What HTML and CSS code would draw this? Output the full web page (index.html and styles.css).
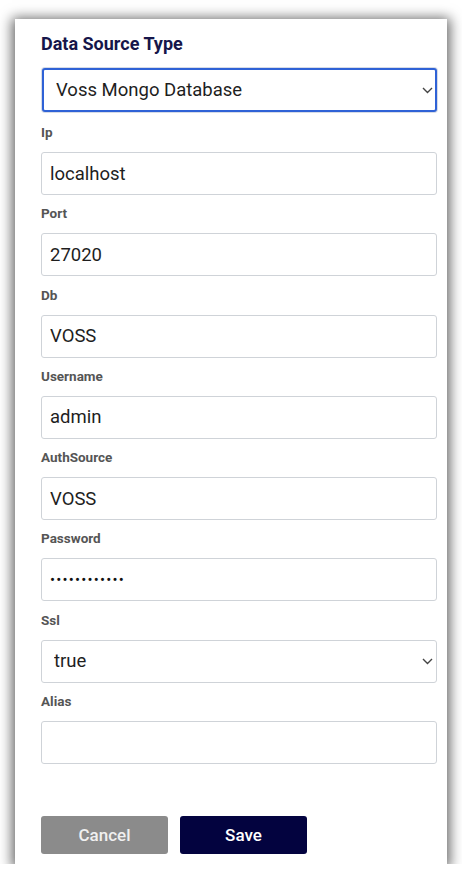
FILE: index.html
```html
<!DOCTYPE html>
<html>
<head>
<meta charset="utf-8">
<link rel="stylesheet" href="styles.css">
</head>
<body>
<div class="card">
  <h2 class="title">Data Source Type</h2>
  <div class="select-wrap focused">
    <select class="control select"><option>Voss Mongo Database</option></select>
    <svg class="chev" width="11" height="7" viewBox="0 0 11 7"><path d="M1 1l4.5 4.5L10 1" fill="none" stroke="#444" stroke-width="1.4"/></svg>
  </div>
  <div class="field first"><label class="label">Ip</label><input class="control" value="localhost"></div>
  <div class="field"><label class="label">Port</label><input class="control" value="27020"></div>
  <div class="field"><label class="label">Db</label><input class="control" value="VOSS"></div>
  <div class="field"><label class="label">Username</label><input class="control" value="admin"></div>
  <div class="field"><label class="label">AuthSource</label><input class="control" value="VOSS"></div>
  <div class="field"><label class="label">Password</label><input class="control pw" value="••••••••••••"></div>
  <div class="field"><label class="label">Ssl</label>
    <div class="select-wrap">
      <select class="control select"><option>true</option></select>
      <svg class="chev" width="11" height="7" viewBox="0 0 11 7"><path d="M1 1l4.5 4.5L10 1" fill="none" stroke="#444" stroke-width="1.4"/></svg>
    </div>
  </div>
  <div class="field"><label class="label">Alias</label><input class="control" value=""></div>
  <div class="actions">
    <button class="btn cancel">Cancel</button>
    <button class="btn save">Save</button>
  </div>
</div>
</body>
</html>
```
FILE: styles.css
```css
* { box-sizing: border-box; }
html, body { margin: 0; padding: 0; background: #fff; }
body { font-family: Roboto, "Liberation Sans", Arial, sans-serif; }
.card {
  width: 432px;
  margin: 19px 0 0 15px;
  background: #fff;
  padding: 14px 10px 10px 26px;
  box-shadow: 0 2px 12px 3px rgba(0,0,0,0.6);
}
.title {
  margin: 0 0 14px 0;
  font-size: 18px;
  line-height: 21px;
  font-weight: 700;
  color: #16164a;
}
.select-wrap { position: relative; width: 396px; }
.select-wrap.focused .control {
  border: 2px solid #2f62d6;
  box-shadow: 0 0 0 1px #d6dbe6;
  margin-left: 1px;
  width: 395px;
  height: 44px;
  padding-left: 12px;
}
.control {
  display: block;
  width: 396px;
  height: 43px;
  border: 1px solid #cfd3d8;
  border-radius: 3px;
  background: #fff;
  font-family: Roboto, "Liberation Sans", Arial, sans-serif;
  font-size: 18.5px;
  color: #1e1e1e;
  padding: 0 8px;
  outline: none;
  margin: 0;
}
.select {
  appearance: none;
  -webkit-appearance: none;
  padding-left: 12px;
}
.pw { font-size: 15px; letter-spacing: 1.2px; color: #111; }
.chev { position: absolute; right: 4px; top: 50%; margin-top: -3px; }
.field { margin-top: 10.3px; }
.field.first { margin-top: 12px; }
.label {
  display: block;
  font-size: 13.5px;
  line-height: 16px;
  font-weight: 700;
  color: #555;
  margin-bottom: 12px;
}
.actions { display: flex; gap: 12px; margin-top: 52px; }
.btn {
  width: 127px;
  height: 38px;
  border: none;
  border-radius: 3px;
  color: #fff;
  font-family: Roboto, "Liberation Sans", Arial, sans-serif;
  font-size: 17px;
  font-weight: 500;
}
.cancel { background: #8b8b8b; color: #f0f0f0; }
.save { background: #03033f; }
```
